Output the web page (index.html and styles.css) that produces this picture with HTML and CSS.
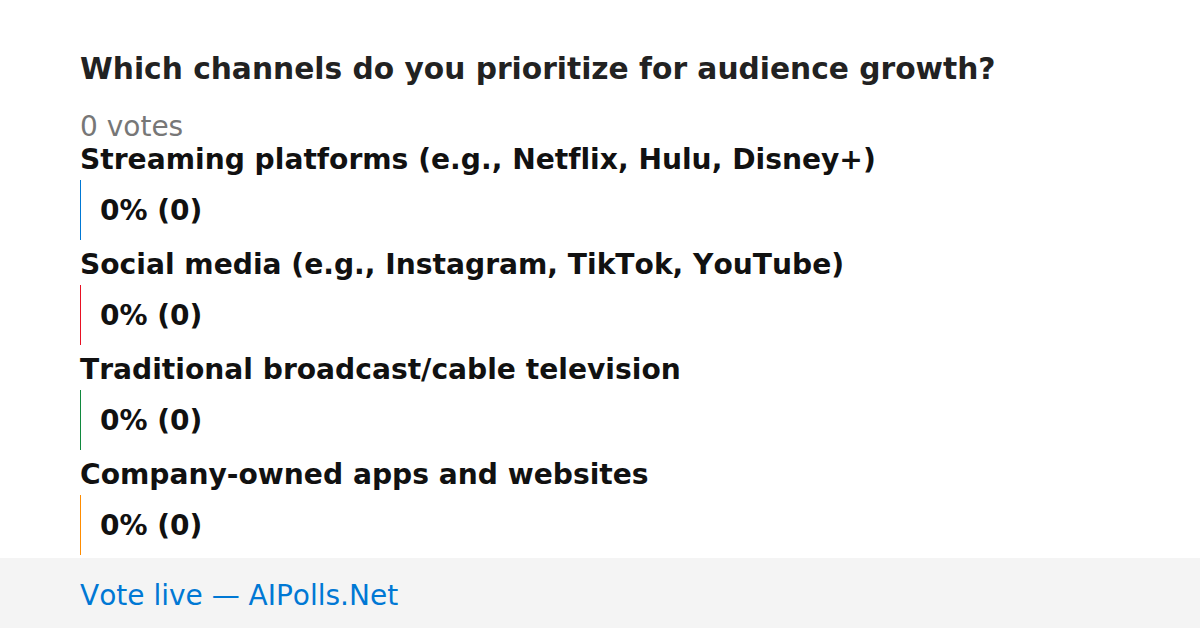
FILE: index.html
```html
<!DOCTYPE html>
<html>
<head>
<meta charset="utf-8">
<link rel="stylesheet" href="styles.css">
</head>
<body>
<main class="poll">
  <h1 class="title">Which channels do you prioritize for audience growth?</h1>
  <div class="votes">0 votes</div>
  <div class="options">
    <div class="option">
      <div class="label">Streaming platforms (e.g., Netflix, Hulu, Disney+)</div>
      <div class="bar blue">0% (0)</div>
    </div>
    <div class="option">
      <div class="label">Social media (e.g., Instagram, TikTok, YouTube)</div>
      <div class="bar red">0% (0)</div>
    </div>
    <div class="option">
      <div class="label">Traditional broadcast/cable television</div>
      <div class="bar green">0% (0)</div>
    </div>
    <div class="option">
      <div class="label">Company-owned apps and websites</div>
      <div class="bar orange">0% (0)</div>
    </div>
  </div>
</main>
<footer class="footer">Vote live — AIPolls.Net</footer>
</body>
</html>
```
FILE: styles.css
```css
html, body {
  margin: 0;
  padding: 0;
  background: #fff;
  font-family: "DejaVu Sans", sans-serif;
  font-kerning: none;
  font-variant-ligatures: none;
  width: 1200px;
  height: 628px;
  overflow: hidden;
}
body {
  display: flex;
  flex-direction: column;
}
.poll {
  flex: 1;
  padding: 49px 80px 0;
}
.title {
  margin: 0;
  font-size: 29.7px;
  line-height: 40px;
  font-weight: bold;
  color: #222;
  white-space: nowrap;
}
.votes {
  margin-top: 27px;
  font-size: 28px;
  line-height: 22px;
  color: #777;
}
.options {
  margin-top: 2px;
  display: flex;
  flex-direction: column;
  gap: 5px;
}
.label {
  line-height: 40px;
  font-size: 28.15px;
  font-weight: bold;
  color: #111;
  white-space: nowrap;
}
.bar {
  height: 60px;
  display: flex;
  align-items: center;
  padding-left: 19px;
  border-left: 1px solid;
  font-size: 28px;
  font-weight: bold;
  color: #111;
}
.blue { border-color: #0078d4; }
.red { border-color: #e81123; }
.green { border-color: #10893e; }
.orange { border-color: #ff8c00; }
.footer {
  height: 70px;
  flex: none;
  box-sizing: border-box;
  padding: 4px 0 0 80px;
  background: #f4f4f4;
  display: flex;
  align-items: center;
  font-size: 28px;
  color: #0078d4;
}
```
